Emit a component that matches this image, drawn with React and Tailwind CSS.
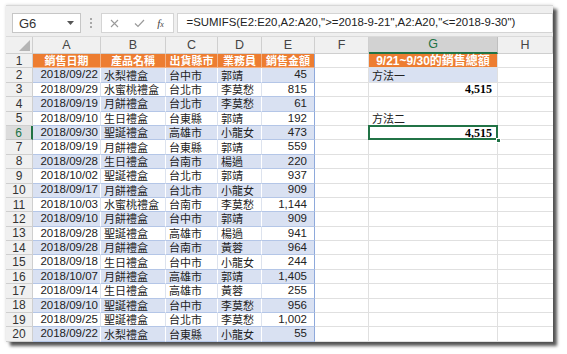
import React from "react";

const COLW = ["w-[27px]", "w-[68px]", "w-[65px]", "w-[52px]", "w-[44px]", "w-[53px]", "w-[54px]", "w-[129px]", "w-[55px]"];
const LETTERS = ["A", "B", "C", "D", "E", "F", "G", "H"];

const DATA = [
  ["2018/09/22", "水梨禮盒", "台中市", "郭靖", "45"],
  ["2018/09/29", "水蜜桃禮盒", "台北市", "李莫愁", "815"],
  ["2018/09/19", "月餅禮盒", "台北市", "李莫愁", "61"],
  ["2018/09/10", "生日禮盒", "台東縣", "郭靖", "192"],
  ["2018/09/30", "聖誕禮盒", "高雄市", "小龍女", "473"],
  ["2018/09/19", "月餅禮盒", "台東縣", "郭靖", "559"],
  ["2018/09/28", "生日禮盒", "台南市", "楊過", "220"],
  ["2018/10/02", "聖誕禮盒", "台北市", "郭靖", "937"],
  ["2018/09/17", "月餅禮盒", "台北市", "小龍女", "909"],
  ["2018/10/03", "水蜜桃禮盒", "台南市", "李莫愁", "1,144"],
  ["2018/09/10", "月餅禮盒", "台中市", "郭靖", "909"],
  ["2018/09/28", "聖誕禮盒", "高雄市", "楊過", "941"],
  ["2018/09/28", "月餅禮盒", "台南市", "黃蓉", "964"],
  ["2018/09/18", "生日禮盒", "台中市", "小龍女", "244"],
  ["2018/10/07", "月餅禮盒", "高雄市", "郭靖", "1,405"],
  ["2018/09/14", "生日禮盒", "高雄市", "黃蓉", "255"],
  ["2018/09/10", "聖誕禮盒", "台中市", "李莫愁", "956"],
  ["2018/09/25", "聖誕禮盒", "台北市", "李莫愁", "1,002"],
  ["2018/09/22", "水梨禮盒", "台東縣", "小龍女", "55"],
];

const SANS = "font-['Liberation_Sans','Noto_Sans_CJK_TC',sans-serif]";
const CJK = "font-['Noto_Sans_CJK_TC',sans-serif]";

function RowHeader({ n, active }) {
  return (
    <div
      className={`${COLW[0]} h-full shrink-0 flex items-center justify-center leading-none border-b border-r text-[12px] ${SANS} ${
        active
          ? "bg-[#dcdcdc] text-[#217346] border-b-[#c8c8c8] border-r-[#217346] border-r-2"
          : "bg-[#f0f0f0] text-[#333] border-[#cfcfcf]"
      }`}
    >
      {n}
    </div>
  );
}

function HeaderRow() {
  const heads = ["銷售日期", "產品名稱", "出貨縣市", "業務員", "銷售金額"];
  return (
    <div className="flex h-[14.4px]">
      <RowHeader n={1} />
      {heads.map((h, i) => (
        <div
          key={i}
          className={`${COLW[i + 1]} shrink-0 h-full bg-[#ed7d31] text-white font-bold text-[11px] leading-none flex items-center justify-center ${CJK} ${
            i < 4 ? "border-r border-r-[#f4b183]" : "border-r border-r-[#8ea9db]"
          } border-b border-b-[#f4b183]`}
        >
          {h}
        </div>
      ))}
      <div className={`${COLW[6]} shrink-0 h-full border-r border-b border-[#e0e0e0]`} />
      <div
        className={`${COLW[7]} shrink-0 h-full bg-[#ed7d31] text-white font-bold text-[12px] leading-none flex items-center justify-center ${SANS} border-r border-b border-[#e0e0e0]`}
      >
        9/21~9/30的銷售總額
      </div>
      <div className={`${COLW[8]} shrink-0 h-full border-b border-[#e0e0e0]`} />
    </div>
  );
}

function DataRow({ idx, row }) {
  const r = idx + 2;
  const blue = r % 2 === 0;
  const bg = blue ? "bg-[#d9e1f2]" : "bg-white";
  const vline = blue ? "border-r-white" : "border-r-[#dde3ee]";
  const base = `shrink-0 h-full flex items-center leading-none whitespace-nowrap border-b border-b-[#b4c6e7] border-r ${bg}`;
  const lastRow = r === 20 ? "border-b-[#8ea9db]" : "";
  let g = null;
  if (r === 2)
    g = (
      <div className={`${COLW[7]} shrink-0 h-full flex items-center leading-none pl-[3px] bg-[#d9e1f2] text-[11px] ${CJK} text-[#222] border-r border-b border-r-[#e0e0e0] border-b-[#e0e0e0]`}>
        方法一
      </div>
    );
  else if (r === 5)
    g = (
      <div className={`${COLW[7]} shrink-0 h-full flex items-center leading-none pl-[3px] text-[11px] ${CJK} text-[#222] border-r border-b border-[#e0e0e0]`}>
        方法二
      </div>
    );
  else if (r === 3)
    g = (
      <div className={`${COLW[7]} shrink-0 h-full flex items-center justify-end leading-none pr-[5px] text-[12px] font-bold font-['Liberation_Serif',serif] text-black border-r border-b border-[#e0e0e0]`}>
        4,515
      </div>
    );
  else if (r === 6)
    g = (
      <div className={`${COLW[7]} shrink-0 h-full relative`}>
        <div className="absolute -left-px -top-px right-0 bottom-0 border-2 border-[#217346] flex items-center justify-end leading-none pr-[4px] text-[12px] font-bold font-['Liberation_Serif',serif] text-black bg-white">
          4,515
        </div>
        <div className="absolute -right-[3px] -bottom-[3px] w-[5px] h-[5px] bg-[#217346] border border-white" />
      </div>
    );
  else g = <div className={`${COLW[7]} shrink-0 h-full border-r border-b border-[#e0e0e0]`} />;

  return (
    <div className="flex h-[14.4px]">
      <RowHeader n={r} active={r === 6} />
      <div className={`${COLW[1]} ${base} ${vline} ${lastRow} justify-end pr-[2px] text-[11.5px] ${SANS} text-[#222]`}>{row[0]}</div>
      <div className={`${COLW[2]} ${base} ${vline} ${lastRow} pl-[3px] text-[11px] ${CJK} text-[#222]`}>{row[1]}</div>
      <div className={`${COLW[3]} ${base} ${vline} ${lastRow} pl-[3px] text-[11px] ${CJK} text-[#222]`}>{row[2]}</div>
      <div className={`${COLW[4]} ${base} ${vline} ${lastRow} pl-[3px] text-[11px] ${CJK} text-[#222]`}>{row[3]}</div>
      <div className={`${COLW[5]} ${base} border-r-[#8ea9db] ${lastRow} justify-end pr-[7px] text-[11.5px] ${SANS} text-[#222]`}>{row[4]}</div>
      <div className={`${COLW[6]} shrink-0 h-full border-r border-b border-[#e0e0e0]`} />
      {g}
      <div className={`${COLW[8]} shrink-0 h-full border-b border-[#e0e0e0]`} />
    </div>
  );
}

export default function App() {
  return (
    <div className="w-[567px] h-[354px] bg-white overflow-hidden pt-[5px] pl-[6px]">
      <div className="w-[547px] h-[337px] bg-white overflow-hidden shadow-[4px_4px_3px_rgba(0,0,0,0.65),0_0_3px_rgba(0,0,0,0.18)] flex flex-col">
        {/* formula bar */}
        <div className="h-[31px] shrink-0 bg-[#efefef] flex items-start pt-[7px] pl-[6px] border-t border-[#d8d8d8]">
          <div className="w-[70px] h-[20px] bg-white border border-[#c6c6c6] flex items-center justify-between pl-[6px] pr-[6px]">
            <span className={`text-[13px] ${SANS} text-[#333] leading-none`}>G6</span>
            <svg width="7" height="4" viewBox="0 0 7 4"><path d="M0 0 L7 0 L3.5 4 Z" fill="#555" /></svg>
          </div>
          <div className="w-[20px] h-[20px] flex flex-col items-center justify-center gap-[2px]">
            <div className="w-[2px] h-[2px] bg-[#a8a8a8]" />
            <div className="w-[2px] h-[2px] bg-[#a8a8a8]" />
            <div className="w-[2px] h-[2px] bg-[#a8a8a8]" />
          </div>
          <div className="w-[73px] h-[20px] bg-white border border-[#d4d4d4] flex items-center">
            <svg className="ml-[8px]" width="9" height="9" viewBox="0 0 9 9"><path d="M1 1 L8 8 M8 1 L1 8" stroke="#9a9a9a" strokeWidth="1.1" /></svg>
            <svg className="ml-[15px]" width="11" height="9" viewBox="0 0 11 9"><path d="M1 4.5 L4 7.5 L10 1" stroke="#9a9a9a" strokeWidth="1.2" fill="none" /></svg>
            <span className="ml-[12px] text-[11px] italic font-['Liberation_Serif',serif] text-[#444] leading-none">
              f<span className="text-[8px]">x</span>
            </span>
          </div>
          <div className="ml-[3px] w-[380px] h-[20px] bg-white border border-[#d4d4d4] flex items-center pl-[9px]">
            <span className={`text-[11.4px] ${SANS} text-[#222] whitespace-nowrap leading-none`}>
              =SUMIFS(E2:E20,A2:A20,"&gt;=2018-9-21",A2:A20,"&lt;=2018-9-30")
            </span>
          </div>
        </div>
        {/* column headers */}
        <div className="flex h-[18px] shrink-0 bg-[#f0f0f0] border-t border-[#dadada]">
          <div className={`${COLW[0]} shrink-0 h-full border-r border-b border-[#cfcfcf] relative`}>
            <svg className="absolute right-[2px] bottom-[2px]" width="11" height="11" viewBox="0 0 11 11"><path d="M11 0 L11 11 L0 11 Z" fill="#b5b5b5" /></svg>
          </div>
          {LETTERS.map((l, i) => (
            <div
              key={l}
              className={`${COLW[i + 1]} shrink-0 h-full flex items-center justify-center leading-none text-[12.5px] ${SANS} ${
                l === "G"
                  ? "bg-[#d2d2d2] text-[#217346] border-r border-r-[#bfbfbf] border-b-2 border-b-[#217346]"
                  : "text-[#444] border-r border-b border-[#cfcfcf]"
              }`}
            >
              {l}
            </div>
          ))}
        </div>
        <HeaderRow />
        {DATA.map((row, i) => (
          <DataRow key={i} idx={i} row={row} />
        ))}
      </div>
    </div>
  );
}
